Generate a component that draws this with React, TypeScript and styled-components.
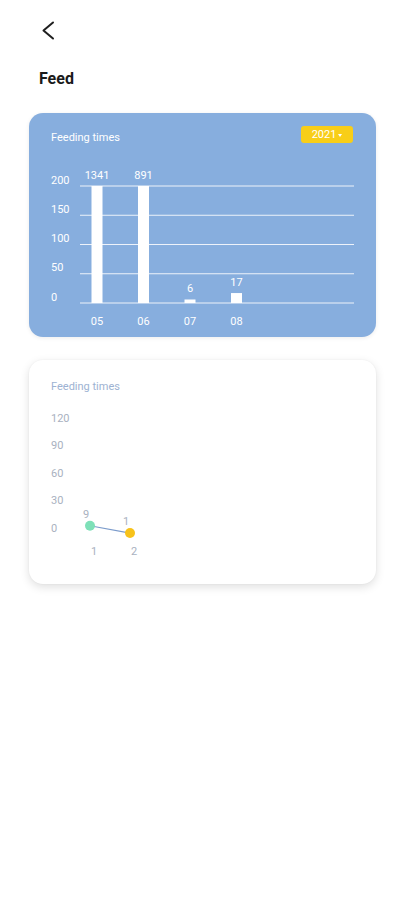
import React from "react";
import styled, { createGlobalStyle } from "styled-components";

const GlobalStyle = createGlobalStyle`
  html, body {
    margin: 0;
    padding: 0;
    background: #ffffff;
    font-family: Roboto, "Noto Sans", "Liberation Sans", sans-serif;
  }
`;

interface BarDatum {
  label: string;
  value: number;
}

interface PointDatum {
  label: string;
  value: number;
  color: string;
}

const bars: BarDatum[] = [
  { label: "05", value: 1341 },
  { label: "06", value: 891 },
  { label: "07", value: 6 },
  { label: "08", value: 17 },
];

const points: PointDatum[] = [
  { label: "1", value: 9, color: "#7EE0B8" },
  { label: "2", value: 1, color: "#F7C21A" },
];

const Page = styled.div`
  width: 404px;
  min-height: 900px;
  background: #ffffff;
`;

const TopBar = styled.div`
  height: 61px;
  display: flex;
  align-items: center;
  padding-left: 41px;
`;

const BackButton = styled.button`
  border: 0;
  background: none;
  padding: 0;
  display: flex;
  cursor: pointer;
`;

const Title = styled.h1`
  margin: 8px 0 0 39px;
  font-size: 16px;
  line-height: 20px;
  font-weight: 700;
  color: #1a1a1a;
`;

const Cards = styled.div`
  margin-top: 24px;
  padding-left: 29px;
  display: flex;
  flex-direction: column;
  gap: 23px;
`;

const Card = styled.div<{ $tone: "blue" | "white" }>`
  width: 347px;
  border-radius: 14px;
  overflow: hidden;
  background: ${(p) => (p.$tone === "blue" ? "#87AEDE" : "#ffffff")};
  box-shadow: ${(p) =>
    p.$tone === "blue"
      ? "0 1px 4px rgba(0, 0, 0, 0.08)"
      : "0 3px 10px rgba(0, 0, 0, 0.13), 0 0 2px rgba(0, 0, 0, 0.05)"};
  padding-top: ${(p) => (p.$tone === "blue" ? "13px" : "18px")};
`;

const CardHead = styled.div`
  display: flex;
  align-items: center;
  justify-content: space-between;
  height: 17px;
  padding: 0 23px 0 22px;
`;

const CardTitle = styled.span<{ $tone: "blue" | "white" }>`
  font-size: 11px;
  line-height: 14px;
  padding-top: ${(p) => (p.$tone === "blue" ? "7px" : "0")};
  color: ${(p) => (p.$tone === "blue" ? "#ffffff" : "#9DB2D2")};
`;

const YearBadge = styled.div`
  width: 52px;
  height: 17px;
  border-radius: 3px;
  background: #F8CE18;
  color: #ffffff;
  font-size: 11px;
  display: flex;
  align-items: center;
  justify-content: center;
  gap: 2px;
  &::after {
    content: "";
    border-left: 2px solid transparent;
    border-right: 2px solid transparent;
    border-top: 3px solid #ffffff;
    margin-top: 1px;
  }
`;

const ChartSvg = styled.svg`
  display: block;
  font-family: Roboto, "Noto Sans", "Liberation Sans", sans-serif;
`;

const BarChart = () => {
  const zeroY = 160;
  const topY = 43;
  const max = 200;
  const ticks = [200, 150, 100, 50, 0];
  const scale = (v: number) => ((zeroY - topY) * Math.min(v, max)) / max;
  return (
    <ChartSvg width={347} height={194} viewBox="0 0 347 194">
      {ticks.map((t) => {
        const y = zeroY - scale(t);
        return (
          <g key={t}>
            <line x1={51} x2={325} y1={y} y2={y} stroke="#ffffff" strokeWidth={1} opacity={0.85} />
            <text x={22} y={y - 2.5} fontSize={11} fill="#ffffff">
              {t}
            </text>
          </g>
        );
      })}
      {bars.map((b, i) => {
        const cx = 68 + i * 46.5;
        const h = Math.max(scale(b.value), 2);
        return (
          <g key={b.label}>
            <rect x={cx - 5.5} y={zeroY - h} width={11} height={h} fill="#ffffff" />
            <text x={cx} y={zeroY - h - 7} fontSize={11} fill="#ffffff" textAnchor="middle">
              {b.value}
            </text>
            <text x={cx} y={182} fontSize={11} fill="#ffffff" textAnchor="middle">
              {b.label}
            </text>
          </g>
        );
      })}
    </ChartSvg>
  );
};

const LineChart = () => {
  const zeroY = 139;
  const step = 27.5;
  const ticks = [120, 90, 60, 30, 0];
  const xs = [61, 101];
  const yOf = (v: number) => zeroY - (v / 30) * step;
  return (
    <ChartSvg width={347} height={189} viewBox="0 0 347 189">
      {ticks.map((t, i) => (
        <text key={t} x={22} y={zeroY - (4 - i) * step - 2.5} fontSize={11} fill="#A9B1C0">
          {t}
        </text>
      ))}
      <polyline
        points={points.map((p, i) => `${xs[i]},${yOf(p.value)}`).join(" ")}
        fill="none"
        stroke="#7B9BCB"
        strokeWidth={1.2}
      />
      {points.map((p, i) => (
        <g key={p.label}>
          <circle cx={xs[i]} cy={yOf(p.value)} r={5} fill={p.color} />
          <text x={xs[i] - 4} y={yOf(p.value) - 8} fontSize={11} fill="#A9B1C0" textAnchor="middle">
            {p.value}
          </text>
          <text x={xs[i] + 4} y={160} fontSize={11} fill="#A9B1C0" textAnchor="middle">
            {p.label}
          </text>
        </g>
      ))}
    </ChartSvg>
  );
};

export default function App() {
  return (
    <Page>
      <GlobalStyle />
      <TopBar>
        <BackButton aria-label="Back">
          <svg width={14} height={19} viewBox="0 0 14 19">
            <path d="M12 1.5 L2.5 9.5 L12 17.5" fill="none" stroke="#1f1f1f" strokeWidth={2} strokeLinecap="round" strokeLinejoin="round" />
          </svg>
        </BackButton>
      </TopBar>
      <Title>Feed</Title>
      <Cards>
        <Card $tone="blue">
          <CardHead>
            <CardTitle $tone="blue">Feeding times</CardTitle>
            <YearBadge>2021</YearBadge>
          </CardHead>
          <BarChart />
        </Card>
        <Card $tone="white">
          <CardHead>
            <CardTitle $tone="white">Feeding times</CardTitle>
          </CardHead>
          <LineChart />
        </Card>
      </Cards>
    </Page>
  );
}
